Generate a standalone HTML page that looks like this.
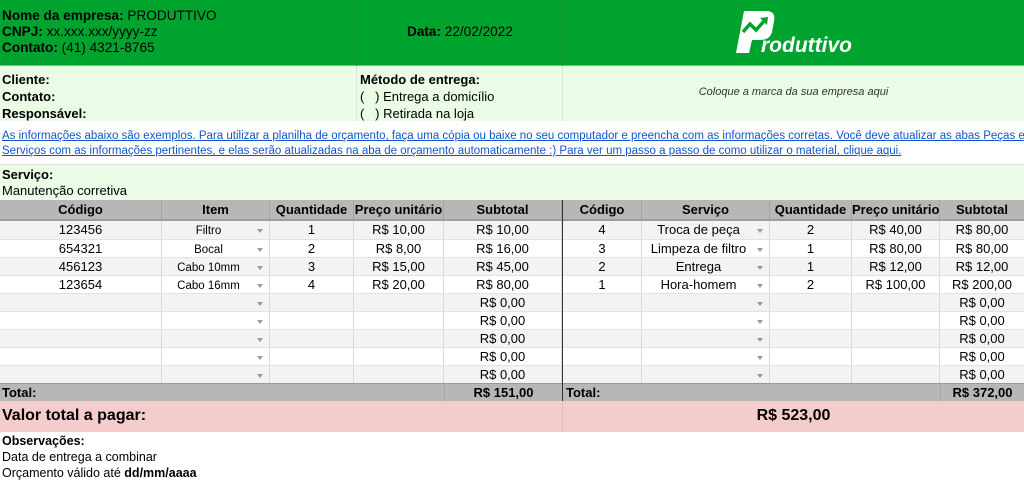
<!DOCTYPE html>
<html><head><meta charset="utf-8"><style>
*{margin:0;padding:0;box-sizing:border-box}
body{width:1024px;height:480px;overflow:hidden;background:#fff;font-family:"Liberation Sans",Arial,sans-serif;color:#000;position:relative}
.a{position:absolute}
.row{position:absolute;left:0;width:1024px;height:18px;font-size:13px;line-height:18px}
.c{position:absolute;top:0;height:100%;text-align:center;border-right:1px solid #dadada;white-space:nowrap;overflow:hidden}
.g{background:#f3f3f3}
.dd::after{content:"";position:absolute;right:6px;top:8px;border-left:3.5px solid transparent;border-right:3.5px solid transparent;border-top:4px solid #999}
.sm{font-size:11.5px}
</style></head><body>
<div class="a" style="left:0;top:0;width:1024px;height:65px;background:#00a32e"></div>
<div class="a" style="left:0;top:65px;width:1024px;height:1px;background:#6cc77f"></div>
<div class="a" style="left:356px;top:0;width:1px;height:66px;background:#129a36"></div>
<div class="a" style="left:562px;top:0;width:1px;height:66px;background:#129a36"></div>
<div class="a" style="left:2px;top:8px;font-size:13.6px;line-height:16px">
<b>Nome da empresa:</b> PRODUTTIVO<br><b>CNPJ:</b> xx.xxx.xxx/yyyy-zz<br><b>Contato:</b> (41) 4321-8765</div>
<div class="a" style="left:407px;top:24px;font-size:13.6px;line-height:16px"><b>Data:</b> 22/02/2022</div>
<svg class="a" style="left:730px;top:8px" width="130" height="50" viewBox="0 0 130 50">
<path d="M14 3 L36 3 Q46 3 44 13 L42 24 Q40 32 30 32 L22 32 L19 45 L6 45 Z" fill="#fff"/>
<path d="M13 24 L20 16 L26 22 L35 12" stroke="#00a32e" stroke-width="3.5" fill="none"/>
<path d="M30 10 L38 9 L37 17 Z" fill="#00a32e"/>
<text x="31" y="44" font-family="Liberation Sans" font-weight="bold" font-style="italic" font-size="21" fill="#fff">roduttivo</text>
</svg>
<div class="a" style="left:0;top:66px;width:1024px;height:55px;background:#eafbe6"></div>
<div class="a" style="left:356px;top:66px;width:1px;height:55px;background:#d6e8d2"></div>
<div class="a" style="left:562px;top:66px;width:1px;height:55px;background:#d6e8d2"></div>
<div class="a" style="left:2px;top:71px;font-size:13px;line-height:17px;font-weight:bold">Cliente:<br>Contato:<br>Responsável:</div>
<div class="a" style="left:360px;top:71px;font-size:13px;line-height:17px"><b>Método de entrega:</b><br>(&nbsp;&nbsp;&nbsp;) Entrega a domicílio<br>(&nbsp;&nbsp;&nbsp;) Retirada na loja</div>
<div class="a" style="left:563px;top:86px;width:461px;text-align:center;font-size:11px;font-style:italic;color:#333">Coloque a marca da sua empresa aqui</div>
<div class="a" style="left:2px;top:129px;width:1030px;font-size:11.5px;line-height:15px;color:#1155cc;text-decoration:underline;white-space:nowrap">As informações abaixo são exemplos. Para utilizar a planilha de orçamento, faça uma cópia ou baixe no seu computador e preencha com as informações corretas. Você deve atualizar as abas Peças e<br>Serviços com as informações pertinentes, e elas serão atualizadas na aba de orçamento automaticamente :) Para ver um passo a passo de como utilizar o material, clique aqui.</div>
<div class="a" style="left:0;top:164px;width:1024px;height:36px;background:#eafbe6;border-top:1px solid #e0e0e0"></div>
<div class="a" style="left:2px;top:167px;font-size:13px;line-height:16px"><b>Serviço:</b><br>Manutenção corretiva</div>

<div class="row" style="top:200px;height:19px;background:#b7b7b7;font-weight:bold;line-height:19px">
<div class="c" style="left:0;width:162px;border-color:#a5a5a5">Código</div><div class="c" style="left:162px;width:108px;border-color:#a5a5a5">Item</div><div class="c" style="left:270px;width:84px;border-color:#a5a5a5">Quantidade</div><div class="c" style="left:354px;width:90px;border-color:#a5a5a5">Preço unitário</div><div class="c" style="left:444px;width:118px;border-color:#a5a5a5">Subtotal</div>
<div class="c" style="left:563px;width:79px;border-color:#a5a5a5">Código</div><div class="c" style="left:642px;width:128px;border-color:#a5a5a5">Serviço</div><div class="c" style="left:770px;width:82px;border-color:#a5a5a5">Quantidade</div><div class="c" style="left:852px;width:88px;border-color:#a5a5a5">Preço unitário</div><div class="c" style="left:940px;width:84px;border:0">Subtotal</div></div>
<div class="a" style="left:0;top:219px;width:1024px;height:2px;background:#9e9e9e"></div>

<div class="row g" style="top:221px"><div class="c" style="left:0;width:162px">123456</div><div class="c dd sm" style="left:162px;width:108px;padding-right:14px;line-height:20px">Filtro</div><div class="c" style="left:270px;width:84px">1</div><div class="c" style="left:354px;width:90px">R$ 10,00</div><div class="c" style="left:444px;width:118px">R$ 10,00</div><div class="c" style="left:563px;width:79px">4</div><div class="c dd" style="left:642px;width:128px;padding-right:14px">Troca de peça</div><div class="c" style="left:770px;width:82px">2</div><div class="c" style="left:852px;width:88px">R$ 40,00</div><div class="c" style="left:940px;width:84px;border:0">R$ 80,00</div></div>
<div class="row" style="top:239px;border-top:1px solid #e2e2e2"><div class="c" style="left:0;width:162px">654321</div><div class="c dd sm" style="left:162px;width:108px;padding-right:14px;line-height:20px">Bocal</div><div class="c" style="left:270px;width:84px">2</div><div class="c" style="left:354px;width:90px">R$ 8,00</div><div class="c" style="left:444px;width:118px">R$ 16,00</div><div class="c" style="left:563px;width:79px">3</div><div class="c dd" style="left:642px;width:128px;padding-right:14px">Limpeza de filtro</div><div class="c" style="left:770px;width:82px">1</div><div class="c" style="left:852px;width:88px">R$ 80,00</div><div class="c" style="left:940px;width:84px;border:0">R$ 80,00</div></div>
<div class="row g" style="top:257px;border-top:1px solid #e2e2e2"><div class="c" style="left:0;width:162px">456123</div><div class="c dd sm" style="left:162px;width:108px;padding-right:14px;line-height:20px">Cabo 10mm</div><div class="c" style="left:270px;width:84px">3</div><div class="c" style="left:354px;width:90px">R$ 15,00</div><div class="c" style="left:444px;width:118px">R$ 45,00</div><div class="c" style="left:563px;width:79px">2</div><div class="c dd" style="left:642px;width:128px;padding-right:14px">Entrega</div><div class="c" style="left:770px;width:82px">1</div><div class="c" style="left:852px;width:88px">R$ 12,00</div><div class="c" style="left:940px;width:84px;border:0">R$ 12,00</div></div>
<div class="row" style="top:275px;border-top:1px solid #e2e2e2"><div class="c" style="left:0;width:162px">123654</div><div class="c dd sm" style="left:162px;width:108px;padding-right:14px;line-height:20px">Cabo 16mm</div><div class="c" style="left:270px;width:84px">4</div><div class="c" style="left:354px;width:90px">R$ 20,00</div><div class="c" style="left:444px;width:118px">R$ 80,00</div><div class="c" style="left:563px;width:79px">1</div><div class="c dd" style="left:642px;width:128px;padding-right:14px">Hora-homem</div><div class="c" style="left:770px;width:82px">2</div><div class="c" style="left:852px;width:88px">R$ 100,00</div><div class="c" style="left:940px;width:84px;border:0">R$ 200,00</div></div>
<div class="row g" style="top:293px;border-top:1px solid #e2e2e2"><div class="c" style="left:0;width:162px"></div><div class="c dd" style="left:162px;width:108px"></div><div class="c" style="left:270px;width:84px"></div><div class="c" style="left:354px;width:90px"></div><div class="c" style="left:444px;width:118px">R$ 0,00</div><div class="c" style="left:563px;width:79px"></div><div class="c dd" style="left:642px;width:128px"></div><div class="c" style="left:770px;width:82px"></div><div class="c" style="left:852px;width:88px"></div><div class="c" style="left:940px;width:84px;border:0">R$ 0,00</div></div>
<div class="row" style="top:311px;border-top:1px solid #e2e2e2"><div class="c" style="left:0;width:162px"></div><div class="c dd" style="left:162px;width:108px"></div><div class="c" style="left:270px;width:84px"></div><div class="c" style="left:354px;width:90px"></div><div class="c" style="left:444px;width:118px">R$ 0,00</div><div class="c" style="left:563px;width:79px"></div><div class="c dd" style="left:642px;width:128px"></div><div class="c" style="left:770px;width:82px"></div><div class="c" style="left:852px;width:88px"></div><div class="c" style="left:940px;width:84px;border:0">R$ 0,00</div></div>
<div class="row g" style="top:329px;border-top:1px solid #e2e2e2"><div class="c" style="left:0;width:162px"></div><div class="c dd" style="left:162px;width:108px"></div><div class="c" style="left:270px;width:84px"></div><div class="c" style="left:354px;width:90px"></div><div class="c" style="left:444px;width:118px">R$ 0,00</div><div class="c" style="left:563px;width:79px"></div><div class="c dd" style="left:642px;width:128px"></div><div class="c" style="left:770px;width:82px"></div><div class="c" style="left:852px;width:88px"></div><div class="c" style="left:940px;width:84px;border:0">R$ 0,00</div></div>
<div class="row" style="top:347px;border-top:1px solid #e2e2e2"><div class="c" style="left:0;width:162px"></div><div class="c dd" style="left:162px;width:108px"></div><div class="c" style="left:270px;width:84px"></div><div class="c" style="left:354px;width:90px"></div><div class="c" style="left:444px;width:118px">R$ 0,00</div><div class="c" style="left:563px;width:79px"></div><div class="c dd" style="left:642px;width:128px"></div><div class="c" style="left:770px;width:82px"></div><div class="c" style="left:852px;width:88px"></div><div class="c" style="left:940px;width:84px;border:0">R$ 0,00</div></div>
<div class="row g" style="top:365px;border-top:1px solid #e2e2e2"><div class="c" style="left:0;width:162px"></div><div class="c dd" style="left:162px;width:108px"></div><div class="c" style="left:270px;width:84px"></div><div class="c" style="left:354px;width:90px"></div><div class="c" style="left:444px;width:118px">R$ 0,00</div><div class="c" style="left:563px;width:79px"></div><div class="c dd" style="left:642px;width:128px"></div><div class="c" style="left:770px;width:82px"></div><div class="c" style="left:852px;width:88px"></div><div class="c" style="left:940px;width:84px;border:0">R$ 0,00</div></div>
<div class="row" style="top:383px;background:#b7b7b7;font-weight:bold;border-top:1px solid #999"><div class="a" style="left:2px">Total:</div><div class="c" style="left:444px;width:118px;border-left:1px solid #a5a5a5;border-right:0">R$ 151,00</div><div class="a" style="left:566px">Total:</div><div class="c" style="left:940px;width:84px;border-left:1px solid #a5a5a5;border-right:0">R$ 372,00</div></div>
<div class="a" style="left:562px;top:200px;width:1px;height:201px;background:#333"></div>
<div class="a" style="left:0;top:401px;width:1024px;height:31px;background:#f4cccc"></div>
<div class="a" style="left:562px;top:401px;width:1px;height:31px;background:#e3bcbc"></div>
<div class="a" style="left:2px;top:407px;font-size:16px;font-weight:bold">Valor total a pagar:</div>
<div class="a" style="left:563px;top:407px;width:461px;text-align:center;font-size:16px;font-weight:bold">R$ 523,00</div>
<div class="a" style="left:2px;top:433px;font-size:12.5px;line-height:16px"><b>Observações:</b><br>Data de entrega a combinar<br>Orçamento válido até <b>dd/mm/aaaa</b></div>
</body></html>
